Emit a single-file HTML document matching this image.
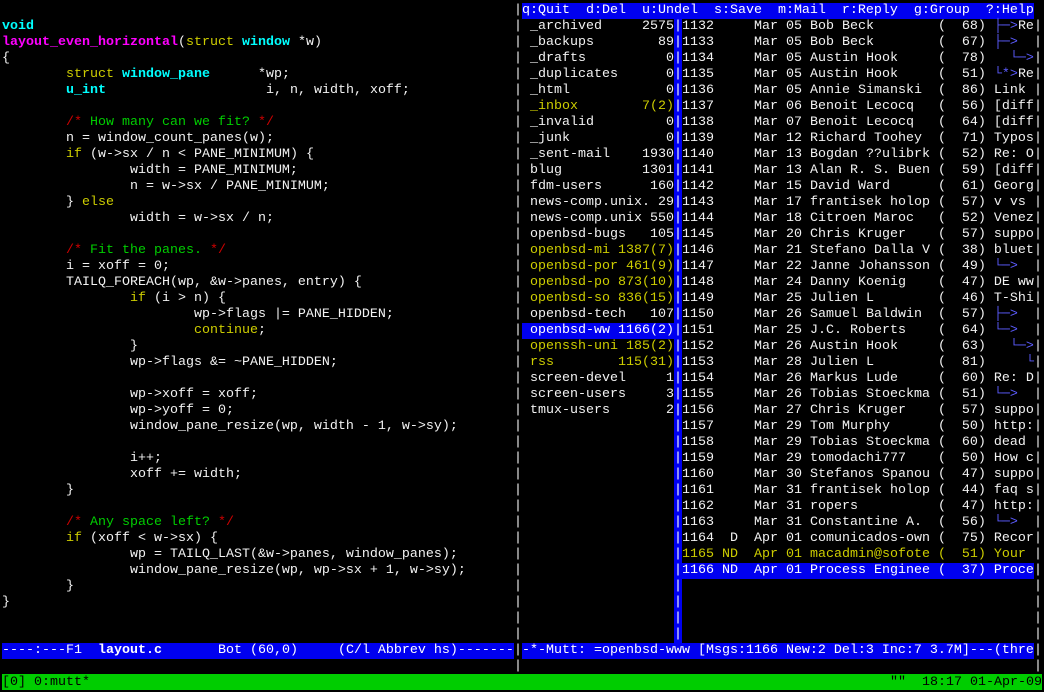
<!DOCTYPE html>
<html><head><meta charset="utf-8"><style>
html,body{margin:0;padding:0;background:#000;width:1044px;height:692px;overflow:hidden}
body{position:relative;font-family:"Liberation Mono","DejaVu Sans Mono",monospace;font-size:13.33px;color:#f2f2f2}
pre{position:absolute;margin:0;font:inherit;line-height:16px;white-space:pre;transform:translateY(1px)}
.c{color:#00ffff;font-weight:bold}.m{color:#ff00ff;font-weight:bold}.y{color:#cdcd00}.g{color:#00cd00}.r{color:#cd0000}
.t{color:#5c5cff}.b{font-weight:bold}
.bar{background:#0000f0;color:#fff}
.hl{background:#0000f0;color:#fff;display:inline-block}
</style></head><body>
<pre style="left:2px;top:18px">
<span class="c">void</span>
<span class="m">layout_even_horizontal</span>(<span class="y">struct</span> <span class="c">window</span> *w)
{
        <span class="y">struct</span> <span class="c">window_pane</span>      *wp;
        <span class="c">u_int</span>                    i, n, width, xoff;

        <span class="r">/*</span><span class="g"> How many can we fit? </span><span class="r">*/</span>
        n = window_count_panes(w);
        <span class="y">if</span> (w-&gt;sx / n &lt; PANE_MINIMUM) {
                width = PANE_MINIMUM;
                n = w-&gt;sx / PANE_MINIMUM;
        } <span class="y">else</span>
                width = w-&gt;sx / n;

        <span class="r">/*</span><span class="g"> Fit the panes. </span><span class="r">*/</span>
        i = xoff = 0;
        TAILQ_FOREACH(wp, &amp;w-&gt;panes, entry) {
                <span class="y">if</span> (i &gt; n) {
                        wp-&gt;flags |= PANE_HIDDEN;
                        <span class="y">continue</span>;
                }
                wp-&gt;flags &amp;= ~PANE_HIDDEN;

                wp-&gt;xoff = xoff;
                wp-&gt;yoff = 0;
                window_pane_resize(wp, width - 1, w-&gt;sy);

                i++;
                xoff += width;
        }

        <span class="r">/*</span><span class="g"> Any space left? </span><span class="r">*/</span>
        <span class="y">if</span> (xoff &lt; w-&gt;sx) {
                wp = TAILQ_LAST(&amp;w-&gt;panes, window_panes);
                window_pane_resize(wp, wp-&gt;sx + 1, w-&gt;sy);
        }
}</pre>
<pre style="left:2px;top:642px" class="bar">----:---F1  <span class="b">layout.c</span>       Bot (60,0)     (C/l Abbrev hs)-------</pre>
<pre style="left:514px;top:2px">|
|
|
|
|
|
|
|
|
|
|
|
|
|
|
|
|
|
|
|
|
|
|
|
|
|
|
|
|
|
|
|
|
|
|
|
|
|
|
|
|
|</pre>
<pre style="left:1034px;top:18px">|
|
|
|
|
|
|
|
|
|
|
|
|
|
|
|
|
|
|
|
|
|
|
|
|
|
|
|
|
|
|
|
|
|
|
|
|
|
|
|
|</pre>
<pre style="left:522px;top:2px" class="bar">q:Quit  d:Del  u:Undel  s:Save  m:Mail  r:Reply  g:Group  ?:Help</pre>
<pre style="left:522px;top:18px"> _archived     2575
 _backups        89
 _drafts          0
 _duplicates      0
 _html            0
<span class="y"> _inbox        7(2)</span>
 _invalid         0
 _junk            0
 _sent-mail    1930
 blug          1301
 fdm-users      160
 news-comp.unix. 29
 news-comp.unix 550
 openbsd-bugs   105
<span class="y"> openbsd-mi 1387(7)</span>
<span class="y"> openbsd-por 461(9)</span>
<span class="y"> openbsd-po 873(10)</span>
<span class="y"> openbsd-so 836(15)</span>
 openbsd-tech   107
<span class="hl"> openbsd-ww 1166(2)</span>
<span class="y"> openssh-uni 185(2)</span>
<span class="y"> rss        115(31)</span>
 screen-devel     1
 screen-users     3
 tmux-users       2</pre>
<pre style="left:674px;top:18px" class="bar">|
|
|
|
|
|
|
|
|
|
|
|
|
|
|
|
|
|
|
|
|
|
|
|
|
|
|
|
|
|
|
|
|
|
|
|
|
|
|</pre>
<pre style="left:682px;top:18px">1132     Mar 05 Bob Beck        (  68) <span class="t">├─&gt;</span>Re
1133     Mar 05 Bob Beck        (  67) <span class="t">├─&gt;</span>
1134     Mar 05 Austin Hook     (  78)   <span class="t">└─&gt;</span>
1135     Mar 05 Austin Hook     (  51) <span class="t">└*&gt;</span>Re
1136     Mar 05 Annie Simanski  (  86) Link
1137     Mar 06 Benoit Lecocq   (  56) [diff
1138     Mar 07 Benoit Lecocq   (  64) [diff
1139     Mar 12 Richard Toohey  (  71) Typos
1140     Mar 13 Bogdan ??ulibrk (  52) Re: O
1141     Mar 13 Alan R. S. Buen (  59) [diff
1142     Mar 15 David Ward      (  61) Georg
1143     Mar 17 frantisek holop (  57) v vs
1144     Mar 18 Citroen Maroc   (  52) Venez
1145     Mar 20 Chris Kruger    (  57) suppo
1146     Mar 21 Stefano Dalla V (  38) bluet
1147     Mar 22 Janne Johansson (  49) <span class="t">└─&gt;</span>
1148     Mar 24 Danny Koenig    (  47) DE ww
1149     Mar 25 Julien L        (  46) T-Shi
1150     Mar 26 Samuel Baldwin  (  57) <span class="t">├─&gt;</span>
1151     Mar 25 J.C. Roberts    (  64) <span class="t">└─&gt;</span>
1152     Mar 26 Austin Hook     (  63)   <span class="t">└─&gt;</span>
1153     Mar 28 Julien L        (  81)     <span class="t">└</span>
1154     Mar 26 Markus Lude     (  60) Re: D
1155     Mar 26 Tobias Stoeckma (  51) <span class="t">└─&gt;</span>
1156     Mar 27 Chris Kruger    (  57) suppo
1157     Mar 29 Tom Murphy      (  50) http:
1158     Mar 29 Tobias Stoeckma (  60) dead
1159     Mar 29 tomodachi777    (  50) How c
1160     Mar 30 Stefanos Spanou (  47) suppo
1161     Mar 31 frantisek holop (  44) faq s
1162     Mar 31 ropers          (  47) http:
1163     Mar 31 Constantine A.  (  56) <span class="t">└─&gt;</span>
1164  D  Apr 01 comunicados-own (  75) Recor
<span class="y">1165 ND  Apr 01 macadmin@sofote (  51) Your </span>
<span class="hl">1166 ND  Apr 01 Process Enginee (  37) Proce</span></pre>
<pre style="left:522px;top:642px" class="bar">-*-Mutt: =openbsd-www [Msgs:1166 New:2 Del:3 Inc:7 3.7M]---(thre</pre>
<div style="position:absolute;left:2px;top:674px;width:1040px;height:16px;background:#00cd00"></div>
<pre style="left:2px;top:674px;color:#000">[0] 0:mutt*</pre>
<pre style="right:2px;top:674px;color:#000">""  18:17 01-Apr-09</pre>
</body></html>
